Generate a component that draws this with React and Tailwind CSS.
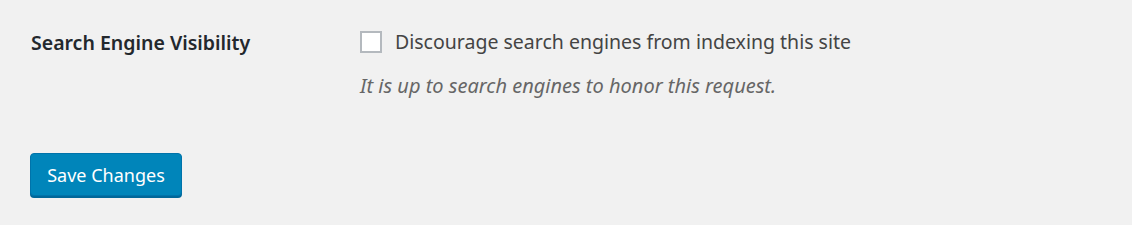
export default function App() {
  return (
    <div
      className="h-[225px] w-full bg-[#f1f1f1] text-[#23282d]"
      style={{ fontFamily: '"Noto Sans", "Open Sans", sans-serif' }}
    >
      <div className="flex pt-[29px] pl-[31px]">
        <div className="w-[329px] pt-[1px] text-[19.5px] font-semibold leading-[26px]">
          Search Engine Visibility
        </div>
        <div className="flex flex-col">
          <label className="flex items-center gap-[13px] text-[19.5px] leading-[26px] text-[#444]">
            <span className="h-[22px] w-[22px] border-2 border-[#b4b9be] bg-white" />
            Discourage search engines from indexing this site
          </label>
          <p className="mt-[18px] text-[20px] italic leading-[26px] text-[#666]">
            It is up to search engines to honor this request.
          </p>
        </div>
      </div>
      <div className="pt-[54px] pl-[30px]">
        <button className="h-[43px] w-[152px] rounded-[4px] border border-[#0073aa] bg-[#0085ba] text-[18px] leading-none text-white shadow-[0_2px_0_#006799]">
          Save Changes
        </button>
      </div>
    </div>
  );
}
